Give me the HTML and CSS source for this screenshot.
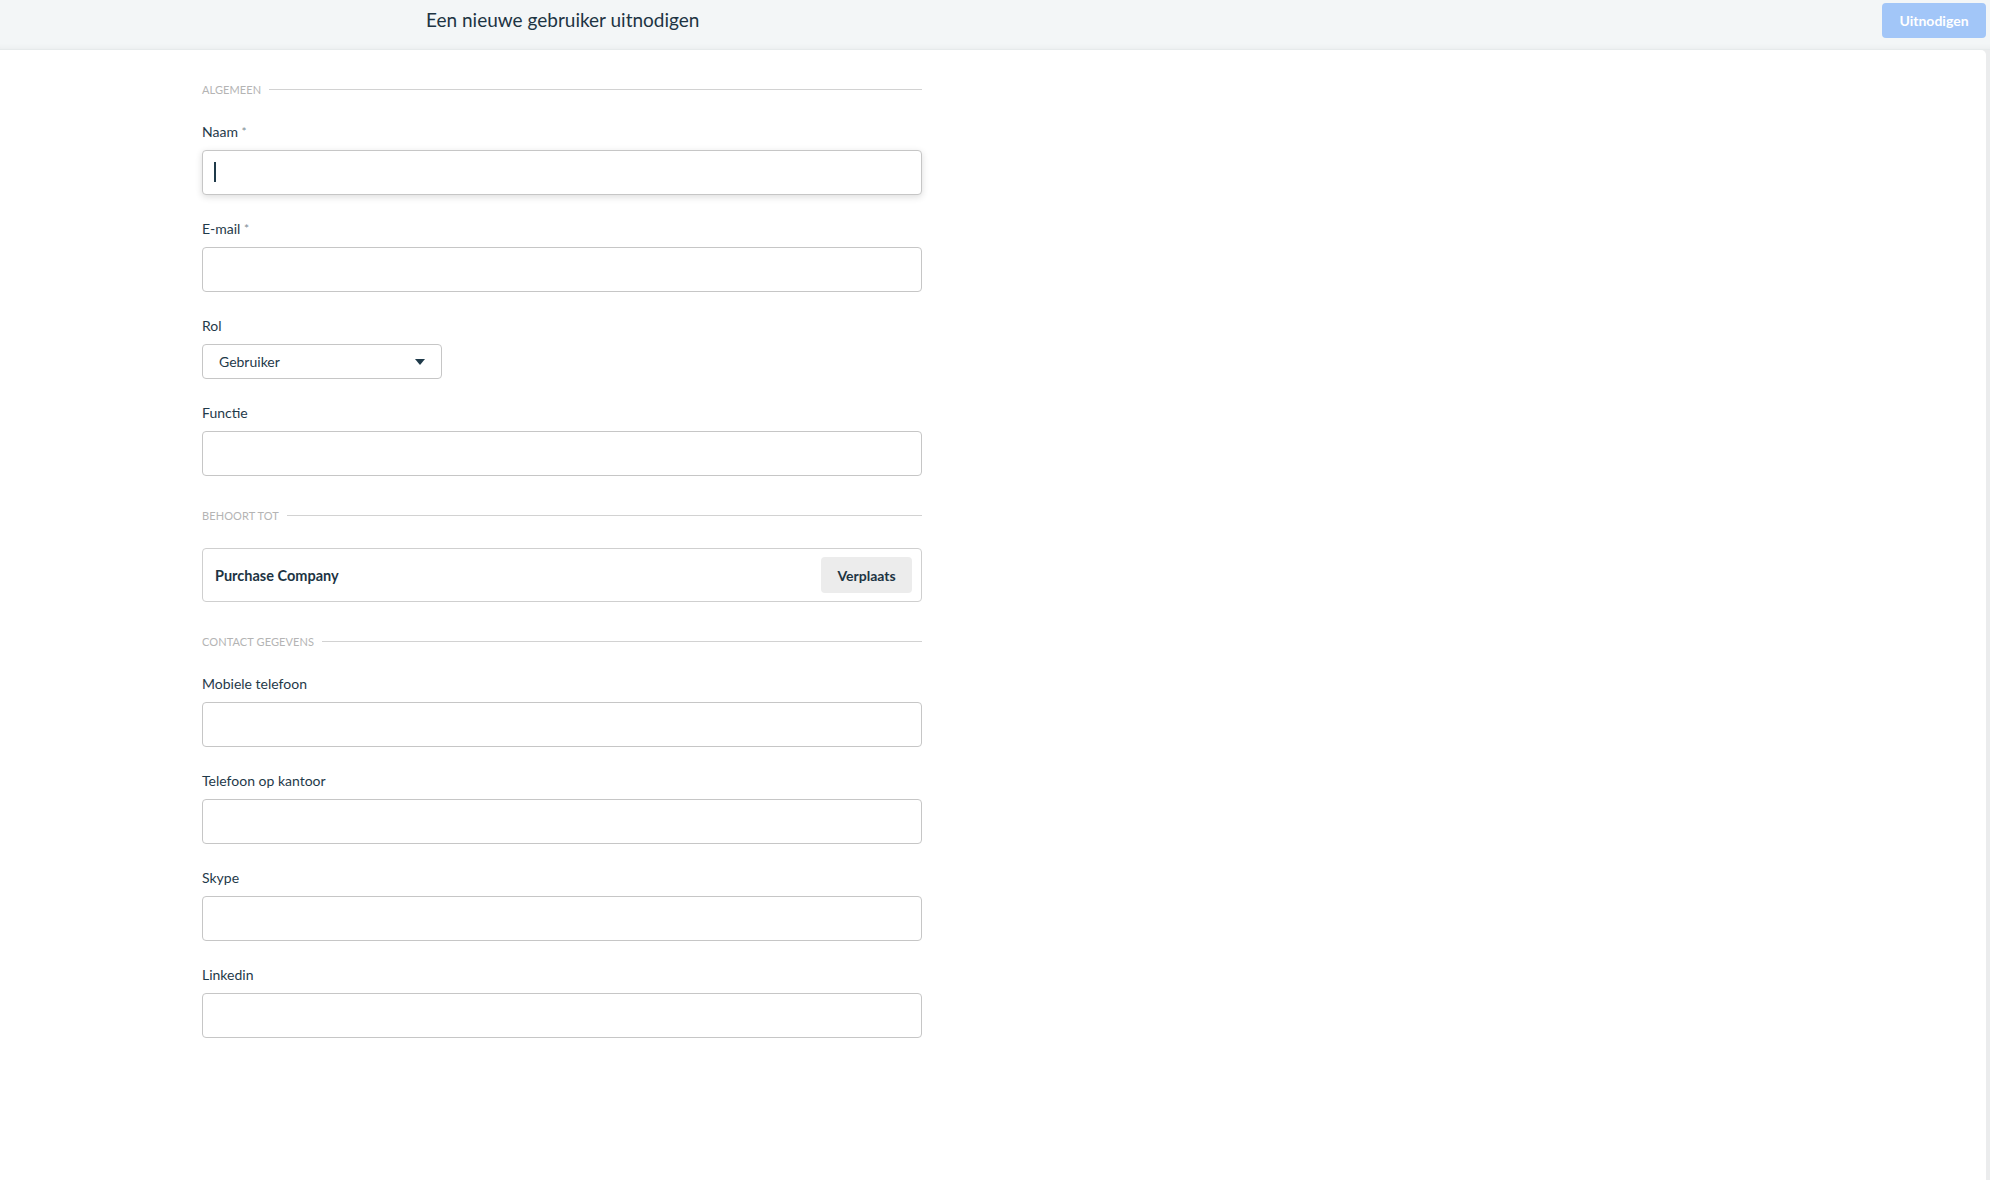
FILE: index.html
```html
<!DOCTYPE html>
<html lang="nl">
<head>
  <meta charset="UTF-8" />
  <meta name="viewport" content="width=device-width, initial-scale=1.0" />
  <title>Een nieuwe gebruiker uitnodigen</title>
  <link rel="stylesheet" href="styles.css">
</head>
<body>

  <header class="topbar">
    <div class="topbar-side"></div>
    <h1 class="topbar-title">Een nieuwe gebruiker uitnodigen</h1>
    <button class="invite-btn" type="button" disabled>Uitnodigen</button>
  </header>

  <main class="panel">
    <form class="user-form">

      <div class="section-title"><span>Algemeen</span></div>

      <div class="field">
        <label class="field-label" for="name">Naam <span class="req">*</span></label>
        <div class="input-wrap">
          <input class="text-input focused" id="name" type="text">
          <span class="fake-caret"></span>
        </div>
      </div>

      <div class="field">
        <label class="field-label" for="email">E-mail <span class="req">*</span></label>
        <input class="text-input" id="email" type="email">
      </div>

      <div class="field">
        <label class="field-label" for="role">Rol</label>
        <div class="select-wrap">
          <select class="select-input" id="role">
            <option>Gebruiker</option>
            <option>Beheerder</option>
          </select>
          <svg class="select-caret" width="10" height="6" viewBox="0 0 10 6"><path d="M0 0h10L5 6z" fill="#1f3a4a"/></svg>
        </div>
      </div>

      <div class="field">
        <label class="field-label" for="function">Functie</label>
        <input class="text-input" id="function" type="text">
      </div>

      <div class="section-title"><span>Behoort tot</span></div>

      <div class="field">
        <div class="company-box">
          <span class="company-name">Purchase Company</span>
          <button class="move-btn" type="button">Verplaats</button>
        </div>
      </div>

      <div class="section-title"><span>Contact gegevens</span></div>

      <div class="field">
        <label class="field-label" for="mobile">Mobiele telefoon</label>
        <input class="text-input" id="mobile" type="text">
      </div>

      <div class="field">
        <label class="field-label" for="office">Telefoon op kantoor</label>
        <input class="text-input" id="office" type="text">
      </div>

      <div class="field">
        <label class="field-label" for="skype">Skype</label>
        <input class="text-input" id="skype" type="text">
      </div>

      <div class="field">
        <label class="field-label" for="linkedin">Linkedin</label>
        <input class="text-input" id="linkedin" type="text">
      </div>

    </form>
  </main>

</body>
</html>
```

FILE: styles.css
```css
  * {
    box-sizing: border-box;
    margin: 0;
    padding: 0;
  }

  html, body {
    height: 100%;
  }

  body {
    font-family: 'Lato', 'Open Sans', sans-serif;
    background: #ebeced;
    color: #1f3a4a;
    display: flex;
    flex-direction: column;
    overflow: hidden;
  }

  /* bovenbalk */
  .topbar {
    height: 50px;
    background: #f3f6f7;
    display: flex;
    align-items: center;
    padding-right: 4px;
    border-bottom: 1px solid #e6eaeb;
    box-shadow: inset 0 -6px 6px -6px rgba(0, 0, 0, 0.06);
  }

  .topbar-side {
    width: 426px;
    flex-shrink: 0;
  }

  .topbar-title {
    flex: 1;
    font-size: 19px;
    font-weight: 400;
    color: #1d3443;
    margin-top: -10px;
  }

  .invite-btn {
    align-self: flex-start;
    margin-top: 3px;
    width: 104px;
    height: 35px;
    border: none;
    border-radius: 4px;
    background: #a2c6f8;
    color: #fff;
    font-family: inherit;
    font-size: 14px;
    font-weight: 700;
  }

  /* inhoud */
  .panel {
    flex: 1;
    background: #fff;
    margin-right: 4px;
    border-radius: 0 5px 0 0;
    padding: 31px 0 0 202px;
  }

  .user-form {
    width: 720px;
  }

  .section-title {
    display: flex;
    align-items: center;
    gap: 8px;
    height: 16px;
    margin: 31px 0 25px;
    font-size: 11px;
    text-transform: uppercase;
    color: #b4b4b4;
    letter-spacing: 0.1px;
  }

  .section-title:first-child {
    margin-top: 0;
  }

  .section-title::after {
    content: "";
    flex: 1;
    height: 1px;
    background: #d2d2d2;
  }

  .field {
    margin-bottom: 24px;
  }

  .field-label {
    display: block;
    font-size: 14px;
    line-height: 20px;
    margin-bottom: 8px;
    color: #1f3a4a;
  }

  .req {
    color: #7d8c96;
    font-size: 12px;
    vertical-align: top;
  }

  .input-wrap {
    position: relative;
  }

  .fake-caret {
    position: absolute;
    left: 12px;
    top: 12px;
    width: 2px;
    height: 20px;
    background: #1f3a4a;
  }

  .text-input {
    display: block;
    width: 100%;
    height: 45px;
    border: 1px solid #c6c6c6;
    border-radius: 4px;
    padding: 0 12px;
    font-family: inherit;
    font-size: 14px;
    color: #1f3a4a;
    outline: none;
  }

  .text-input.focused {
    box-shadow: 0 2px 7px rgba(0, 0, 0, 0.14);
  }

  .select-wrap {
    position: relative;
    width: 240px;
  }

  .select-input {
    appearance: none;
    -webkit-appearance: none;
    width: 100%;
    height: 35px;
    border: 1px solid #c6c6c6;
    border-radius: 4px;
    background: #fff;
    padding: 0 16px;
    font-family: inherit;
    font-size: 14px;
    color: #1f3a4a;
  }

  .select-caret {
    position: absolute;
    right: 17px;
    top: 15px;
    pointer-events: none;
  }

  .company-box {
    display: flex;
    align-items: center;
    justify-content: space-between;
    height: 54px;
    border: 1px solid #cfcfcf;
    border-radius: 4px;
    padding: 0 9px 0 12px;
  }

  .company-name {
    font-size: 14.5px;
    font-weight: 700;
    color: #1d3443;
  }

  .move-btn {
    width: 91px;
    height: 36px;
    border: none;
    border-radius: 4px;
    background: #ececec;
    color: #1d3443;
    font-family: inherit;
    font-size: 14px;
    font-weight: 700;
  }
```
